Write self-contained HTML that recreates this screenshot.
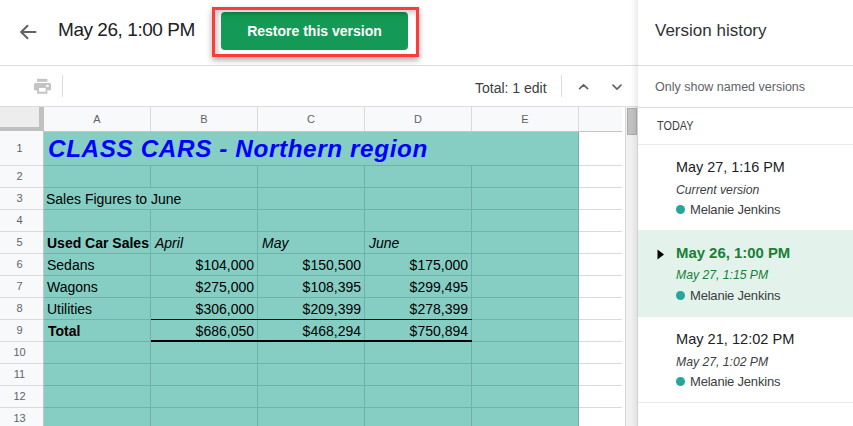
<!DOCTYPE html>
<html><head><meta charset="utf-8">
<style>
*{margin:0;padding:0;box-sizing:border-box}
html,body{width:853px;height:426px;overflow:hidden;background:#fff;font-family:"Liberation Sans",sans-serif;position:relative}
.a{position:absolute;white-space:nowrap}
.hl{position:absolute;height:1px;background:#dadce0}
.vl{position:absolute;width:1px;background:#dadce0}
/* sheet */
.rh{position:absolute;left:0;width:43px;background:#f8f9fa;color:#5f6368;font-size:11px;text-align:center}
.ch{position:absolute;top:107px;height:24px;background:#f8f9fa;color:#5f6368;font-size:11px;text-align:center;line-height:24px}
.cell{position:absolute;font-size:14px;color:#000;white-space:nowrap}
.r{text-align:right}
</style></head><body>

<!-- top header -->
<svg class="a" style="left:18px;top:23px" width="20" height="18" viewBox="0 0 20 18">
  <path d="M17.5 9H3.5M9.5 2.7L3.2 9l6.3 6.3" fill="none" stroke="#5f6368" stroke-width="2" stroke-linecap="round"/>
</svg>
<div class="a" style="left:58px;top:18px;font-size:19px;letter-spacing:-0.45px;color:#202124;line-height:24px">May 26, 1:00 PM</div>

<div class="a" style="left:212px;top:7px;width:207px;height:50px;border:3px solid #ff3a3a;box-shadow:0 3px 6px rgba(0,0,0,0.34), inset 3px 3px 5px rgba(0,0,0,0.2)"></div>
<div class="a" style="left:221px;top:12px;width:187px;height:38px;background:linear-gradient(#0b7a40,#11964f 4px,#149a56 12px);border-radius:4px;color:#fff;font-weight:bold;font-size:14px;line-height:38px;text-align:center">Restore this version</div>

<div class="hl" style="left:0;top:65px;width:853px"></div>

<!-- toolbar -->
<svg class="a" style="left:34px;top:78px" width="17" height="17" viewBox="0 0 17 17">
  <rect x="3" y="0.8" width="10.4" height="3" fill="#c4c4c4"/>
  <path fill-rule="evenodd" d="M1.5 5H15.5A1.5 1.5 0 0 1 17 6.5V12.3H13.4V15.8H3V12.3H0V6.5A1.5 1.5 0 0 1 1.5 5ZM5 10V13.8H11.7V10ZM12.3 7.1V9H14.7V7.1Z" fill="#c4c4c4"/>
</svg>
<div class="vl" style="left:62px;top:75px;height:22px"></div>
<div class="a" style="left:475px;top:79px;font-size:14px;color:#3c4043;line-height:18px">Total: 1 edit</div>
<div class="vl" style="left:561px;top:75px;height:22px"></div>
<svg class="a" style="left:577px;top:82px" width="13" height="10" viewBox="0 0 13 10">
  <path d="M2.6 6.6L6.6 2.8 10.6 6.6" fill="none" stroke="#5f6368" stroke-width="1.7" stroke-linecap="round"/>
</svg>
<svg class="a" style="left:611px;top:82px" width="13" height="10" viewBox="0 0 13 10">
  <path d="M2 3.2L6 7 10 3.2" fill="none" stroke="#5f6368" stroke-width="1.7" stroke-linecap="round"/>
</svg>
<div class="hl" style="left:0;top:106px;width:853px"></div>

<!-- SHEET -->
<div id="sheet"><div class="a" style="left:0px;top:107px;width:622px;height:24px;background:#f8f9fa;"></div>
<div class="a" style="left:0px;top:107px;width:39px;height:20px;background:#ededed;"></div>
<div class="a" style="left:39px;top:107px;width:5px;height:24px;background:#c0c0c0;"></div>
<div class="a" style="left:0px;top:127px;width:43px;height:4px;background:#c0c0c0;"></div>
<div class="a" style="left:150px;top:107px;width:1px;height:24px;background:#dadada;"></div>
<div class="a" style="left:257px;top:107px;width:1px;height:24px;background:#dadada;"></div>
<div class="a" style="left:364px;top:107px;width:1px;height:24px;background:#dadada;"></div>
<div class="a" style="left:471px;top:107px;width:1px;height:24px;background:#dadada;"></div>
<div class="a" style="left:578px;top:107px;width:1px;height:24px;background:#dadada;"></div>
<div class="a" style="left:43px;top:131px;width:579px;height:1px;background:#c6c6c6;"></div>
<div class="a" style="left:44px;top:107px;width:106px;height:24px;line-height:24px;text-align:center;font-size:11px;color:#5f6368">A</div>
<div class="a" style="left:151px;top:107px;width:106px;height:24px;line-height:24px;text-align:center;font-size:11px;color:#5f6368">B</div>
<div class="a" style="left:258px;top:107px;width:106px;height:24px;line-height:24px;text-align:center;font-size:11px;color:#5f6368">C</div>
<div class="a" style="left:365px;top:107px;width:106px;height:24px;line-height:24px;text-align:center;font-size:11px;color:#5f6368">D</div>
<div class="a" style="left:472px;top:107px;width:106px;height:24px;line-height:24px;text-align:center;font-size:11px;color:#5f6368">E</div>
<div class="a" style="left:0px;top:131px;width:43px;height:295px;background:#f8f9fa;"></div>
<div class="a" style="left:43px;top:131px;width:1px;height:295px;background:#c6c6c6;"></div>
<div class="a" style="left:0px;top:165px;width:43px;height:1px;background:#dadada;"></div>
<div class="a" style="left:0px;top:187px;width:43px;height:1px;background:#dadada;"></div>
<div class="a" style="left:0px;top:209px;width:43px;height:1px;background:#dadada;"></div>
<div class="a" style="left:0px;top:231px;width:43px;height:1px;background:#dadada;"></div>
<div class="a" style="left:0px;top:253px;width:43px;height:1px;background:#dadada;"></div>
<div class="a" style="left:0px;top:275px;width:43px;height:1px;background:#dadada;"></div>
<div class="a" style="left:0px;top:297px;width:43px;height:1px;background:#dadada;"></div>
<div class="a" style="left:0px;top:319px;width:43px;height:1px;background:#dadada;"></div>
<div class="a" style="left:0px;top:341px;width:43px;height:1px;background:#dadada;"></div>
<div class="a" style="left:0px;top:363px;width:43px;height:1px;background:#dadada;"></div>
<div class="a" style="left:0px;top:385px;width:43px;height:1px;background:#dadada;"></div>
<div class="a" style="left:0px;top:407px;width:43px;height:1px;background:#dadada;"></div>
<div class="a" style="left:0;top:132px;width:39px;height:33px;line-height:33px;text-align:center;font-size:11px;color:#5f6368">1</div>
<div class="a" style="left:0;top:166px;width:39px;height:21px;line-height:21px;text-align:center;font-size:11px;color:#5f6368">2</div>
<div class="a" style="left:0;top:188px;width:39px;height:21px;line-height:21px;text-align:center;font-size:11px;color:#5f6368">3</div>
<div class="a" style="left:0;top:210px;width:39px;height:21px;line-height:21px;text-align:center;font-size:11px;color:#5f6368">4</div>
<div class="a" style="left:0;top:232px;width:39px;height:21px;line-height:21px;text-align:center;font-size:11px;color:#5f6368">5</div>
<div class="a" style="left:0;top:254px;width:39px;height:21px;line-height:21px;text-align:center;font-size:11px;color:#5f6368">6</div>
<div class="a" style="left:0;top:276px;width:39px;height:21px;line-height:21px;text-align:center;font-size:11px;color:#5f6368">7</div>
<div class="a" style="left:0;top:298px;width:39px;height:21px;line-height:21px;text-align:center;font-size:11px;color:#5f6368">8</div>
<div class="a" style="left:0;top:320px;width:39px;height:21px;line-height:21px;text-align:center;font-size:11px;color:#5f6368">9</div>
<div class="a" style="left:0;top:342px;width:39px;height:21px;line-height:21px;text-align:center;font-size:11px;color:#5f6368">10</div>
<div class="a" style="left:0;top:364px;width:39px;height:21px;line-height:21px;text-align:center;font-size:11px;color:#5f6368">11</div>
<div class="a" style="left:0;top:386px;width:39px;height:21px;line-height:21px;text-align:center;font-size:11px;color:#5f6368">12</div>
<div class="a" style="left:0;top:408px;width:39px;height:21px;line-height:21px;text-align:center;font-size:11px;color:#5f6368">13</div>
<div class="a" style="left:44px;top:132px;width:534px;height:294px;background:#86cdc4;"></div>
<div class="a" style="left:579px;top:132px;width:43px;height:294px;background:#fff;"></div>
<div class="a" style="left:579px;top:165px;width:43px;height:1px;background:#dadada;"></div>
<div class="a" style="left:44px;top:165px;width:534px;height:1px;background:#70b1a9;"></div>
<div class="a" style="left:579px;top:187px;width:43px;height:1px;background:#dadada;"></div>
<div class="a" style="left:44px;top:187px;width:534px;height:1px;background:#70b1a9;"></div>
<div class="a" style="left:579px;top:209px;width:43px;height:1px;background:#dadada;"></div>
<div class="a" style="left:44px;top:209px;width:534px;height:1px;background:#70b1a9;"></div>
<div class="a" style="left:579px;top:231px;width:43px;height:1px;background:#dadada;"></div>
<div class="a" style="left:44px;top:231px;width:534px;height:1px;background:#70b1a9;"></div>
<div class="a" style="left:579px;top:253px;width:43px;height:1px;background:#dadada;"></div>
<div class="a" style="left:44px;top:253px;width:534px;height:1px;background:#70b1a9;"></div>
<div class="a" style="left:579px;top:275px;width:43px;height:1px;background:#dadada;"></div>
<div class="a" style="left:44px;top:275px;width:534px;height:1px;background:#70b1a9;"></div>
<div class="a" style="left:579px;top:297px;width:43px;height:1px;background:#dadada;"></div>
<div class="a" style="left:44px;top:297px;width:534px;height:1px;background:#70b1a9;"></div>
<div class="a" style="left:579px;top:319px;width:43px;height:1px;background:#dadada;"></div>
<div class="a" style="left:44px;top:319px;width:534px;height:1px;background:#70b1a9;"></div>
<div class="a" style="left:579px;top:341px;width:43px;height:1px;background:#dadada;"></div>
<div class="a" style="left:44px;top:341px;width:534px;height:1px;background:#70b1a9;"></div>
<div class="a" style="left:579px;top:363px;width:43px;height:1px;background:#dadada;"></div>
<div class="a" style="left:44px;top:363px;width:534px;height:1px;background:#70b1a9;"></div>
<div class="a" style="left:579px;top:385px;width:43px;height:1px;background:#dadada;"></div>
<div class="a" style="left:44px;top:385px;width:534px;height:1px;background:#70b1a9;"></div>
<div class="a" style="left:579px;top:407px;width:43px;height:1px;background:#dadada;"></div>
<div class="a" style="left:44px;top:407px;width:534px;height:1px;background:#70b1a9;"></div>
<div class="a" style="left:578px;top:132px;width:1px;height:294px;background:#70b1a9;"></div>
<div class="a" style="left:150px;top:166px;width:1px;height:21px;background:#70b1a9;"></div>
<div class="a" style="left:257px;top:166px;width:1px;height:21px;background:#70b1a9;"></div>
<div class="a" style="left:364px;top:166px;width:1px;height:21px;background:#70b1a9;"></div>
<div class="a" style="left:471px;top:166px;width:1px;height:21px;background:#70b1a9;"></div>
<div class="a" style="left:257px;top:188px;width:1px;height:21px;background:#70b1a9;"></div>
<div class="a" style="left:364px;top:188px;width:1px;height:21px;background:#70b1a9;"></div>
<div class="a" style="left:471px;top:188px;width:1px;height:21px;background:#70b1a9;"></div>
<div class="a" style="left:150px;top:210px;width:1px;height:21px;background:#70b1a9;"></div>
<div class="a" style="left:257px;top:210px;width:1px;height:21px;background:#70b1a9;"></div>
<div class="a" style="left:364px;top:210px;width:1px;height:21px;background:#70b1a9;"></div>
<div class="a" style="left:471px;top:210px;width:1px;height:21px;background:#70b1a9;"></div>
<div class="a" style="left:150px;top:232px;width:1px;height:21px;background:#70b1a9;"></div>
<div class="a" style="left:257px;top:232px;width:1px;height:21px;background:#70b1a9;"></div>
<div class="a" style="left:364px;top:232px;width:1px;height:21px;background:#70b1a9;"></div>
<div class="a" style="left:471px;top:232px;width:1px;height:21px;background:#70b1a9;"></div>
<div class="a" style="left:150px;top:254px;width:1px;height:21px;background:#70b1a9;"></div>
<div class="a" style="left:257px;top:254px;width:1px;height:21px;background:#70b1a9;"></div>
<div class="a" style="left:364px;top:254px;width:1px;height:21px;background:#70b1a9;"></div>
<div class="a" style="left:471px;top:254px;width:1px;height:21px;background:#70b1a9;"></div>
<div class="a" style="left:150px;top:276px;width:1px;height:21px;background:#70b1a9;"></div>
<div class="a" style="left:257px;top:276px;width:1px;height:21px;background:#70b1a9;"></div>
<div class="a" style="left:364px;top:276px;width:1px;height:21px;background:#70b1a9;"></div>
<div class="a" style="left:471px;top:276px;width:1px;height:21px;background:#70b1a9;"></div>
<div class="a" style="left:150px;top:298px;width:1px;height:21px;background:#70b1a9;"></div>
<div class="a" style="left:257px;top:298px;width:1px;height:21px;background:#70b1a9;"></div>
<div class="a" style="left:364px;top:298px;width:1px;height:21px;background:#70b1a9;"></div>
<div class="a" style="left:471px;top:298px;width:1px;height:21px;background:#70b1a9;"></div>
<div class="a" style="left:150px;top:320px;width:1px;height:21px;background:#70b1a9;"></div>
<div class="a" style="left:257px;top:320px;width:1px;height:21px;background:#70b1a9;"></div>
<div class="a" style="left:364px;top:320px;width:1px;height:21px;background:#70b1a9;"></div>
<div class="a" style="left:471px;top:320px;width:1px;height:21px;background:#70b1a9;"></div>
<div class="a" style="left:150px;top:342px;width:1px;height:21px;background:#70b1a9;"></div>
<div class="a" style="left:257px;top:342px;width:1px;height:21px;background:#70b1a9;"></div>
<div class="a" style="left:364px;top:342px;width:1px;height:21px;background:#70b1a9;"></div>
<div class="a" style="left:471px;top:342px;width:1px;height:21px;background:#70b1a9;"></div>
<div class="a" style="left:150px;top:364px;width:1px;height:21px;background:#70b1a9;"></div>
<div class="a" style="left:257px;top:364px;width:1px;height:21px;background:#70b1a9;"></div>
<div class="a" style="left:364px;top:364px;width:1px;height:21px;background:#70b1a9;"></div>
<div class="a" style="left:471px;top:364px;width:1px;height:21px;background:#70b1a9;"></div>
<div class="a" style="left:150px;top:386px;width:1px;height:21px;background:#70b1a9;"></div>
<div class="a" style="left:257px;top:386px;width:1px;height:21px;background:#70b1a9;"></div>
<div class="a" style="left:364px;top:386px;width:1px;height:21px;background:#70b1a9;"></div>
<div class="a" style="left:471px;top:386px;width:1px;height:21px;background:#70b1a9;"></div>
<div class="a" style="left:150px;top:408px;width:1px;height:21px;background:#70b1a9;"></div>
<div class="a" style="left:257px;top:408px;width:1px;height:21px;background:#70b1a9;"></div>
<div class="a" style="left:364px;top:408px;width:1px;height:21px;background:#70b1a9;"></div>
<div class="a" style="left:471px;top:408px;width:1px;height:21px;background:#70b1a9;"></div>
<div class="a" style="left:48px;top:135px;font-size:24.3px;letter-spacing:0.6px;font-weight:bold;font-style:italic;color:#0000ff;line-height:28px">CLASS CARS - Northern region</div>
<div class="a" style="left:46px;top:191px;font-size:14px;color:#000;line-height:16px">Sales Figures to June</div>
<div class="a" style="left:47px;top:235px;font-size:14px;color:#000;line-height:16px;font-weight:bold">Used Car Sales</div>
<div class="a" style="left:155px;top:235px;font-size:14px;color:#000;line-height:16px;font-style:italic">April</div>
<div class="a" style="left:262px;top:235px;font-size:14px;color:#000;line-height:16px;font-style:italic">May</div>
<div class="a" style="left:369px;top:235px;font-size:14px;color:#000;line-height:16px;font-style:italic">June</div>
<div class="a" style="left:47px;top:257px;font-size:14px;color:#000;line-height:16px">Sedans</div>
<div class="a" style="left:47px;top:279px;font-size:14px;color:#000;line-height:16px">Wagons</div>
<div class="a" style="left:47px;top:301px;font-size:14px;color:#000;line-height:16px">Utilities</div>
<div class="a" style="left:48px;top:323px;font-size:14px;color:#000;line-height:16px;font-weight:bold">Total</div>
<div class="a" style="left:151px;top:257px;width:103px;text-align:right;font-size:14px;color:#000;line-height:16px">$104,000</div>
<div class="a" style="left:258px;top:257px;width:103px;text-align:right;font-size:14px;color:#000;line-height:16px">$150,500</div>
<div class="a" style="left:365px;top:257px;width:103px;text-align:right;font-size:14px;color:#000;line-height:16px">$175,000</div>
<div class="a" style="left:151px;top:279px;width:103px;text-align:right;font-size:14px;color:#000;line-height:16px">$275,000</div>
<div class="a" style="left:258px;top:279px;width:103px;text-align:right;font-size:14px;color:#000;line-height:16px">$108,395</div>
<div class="a" style="left:365px;top:279px;width:103px;text-align:right;font-size:14px;color:#000;line-height:16px">$299,495</div>
<div class="a" style="left:151px;top:301px;width:103px;text-align:right;font-size:14px;color:#000;line-height:16px">$306,000</div>
<div class="a" style="left:258px;top:301px;width:103px;text-align:right;font-size:14px;color:#000;line-height:16px">$209,399</div>
<div class="a" style="left:365px;top:301px;width:103px;text-align:right;font-size:14px;color:#000;line-height:16px">$278,399</div>
<div class="a" style="left:151px;top:323px;width:103px;text-align:right;font-size:14px;color:#000;line-height:16px">$686,050</div>
<div class="a" style="left:258px;top:323px;width:103px;text-align:right;font-size:14px;color:#000;line-height:16px">$468,294</div>
<div class="a" style="left:365px;top:323px;width:103px;text-align:right;font-size:14px;color:#000;line-height:16px">$750,894</div>
<div class="a" style="left:151px;top:319px;width:321px;height:1px;background:#000;"></div>
<div class="a" style="left:151px;top:340px;width:321px;height:2px;background:#000;"></div>
<div class="a" style="left:625px;top:107px;width:1px;height:319px;background:#d6d6d6;"></div>
<div class="a" style="left:626px;top:107px;width:11px;height:319px;background:#f1f1f1;"></div>
<div class="a" style="left:637px;top:107px;width:1px;height:319px;background:#e0e0e0;"></div>
<div class="a" style="left:627px;top:108px;width:10px;height:27px;background:#c1c1c1;border:1px solid #acacac"></div></div><!--/sheet-->

<!-- panel -->
<div class="a" style="left:631px;top:0;width:7px;height:426px;background:linear-gradient(to right,rgba(0,0,0,0),rgba(0,0,0,0.07))"></div>
<div class="a" style="left:638px;top:0;width:215px;height:426px;background:#fff"></div>
<div class="hl" style="left:638px;top:65px;width:215px"></div>
<div class="hl" style="left:638px;top:107px;width:215px"></div>
<div class="a" style="left:655px;top:21px;font-size:17px;color:#303134;line-height:20px">Version history</div>
<div class="a" style="left:655px;top:80px;font-size:12.5px;color:#5f6368;line-height:15px">Only show named versions</div>
<div class="a" style="left:657px;top:119px;font-size:12.5px;color:#3c4043;line-height:15px;transform:scaleX(0.87);transform-origin:0 0">TODAY</div>
<div class="hl" style="left:638px;top:144px;width:215px;background:#e8eaed"></div>

<div class="a" style="left:676px;top:159px;font-size:14.4px;color:#202124;line-height:17px">May 27, 1:16 PM</div>
<div class="a" style="left:676px;top:183px;font-size:12.2px;font-style:italic;color:#3c4043;line-height:15px">Current version</div>
<div class="a" style="left:676px;top:205px;width:9px;height:9px;border-radius:50%;background:#26a69a"></div>
<div class="a" style="left:690px;top:202px;font-size:13px;letter-spacing:-0.2px;color:#3c4043;line-height:15px">Melanie Jenkins</div>

<div class="a" style="left:638px;top:230px;width:215px;height:87px;background:#e3f2ea"></div>
<svg class="a" style="left:657px;top:249px" width="8" height="11" viewBox="0 0 8 11"><path d="M0.5 0.5L7 5.5 0.5 10.5z" fill="#000"/></svg>
<div class="a" style="left:676px;top:245px;font-size:14.9px;font-weight:bold;color:#188038;line-height:17px">May 26, 1:00 PM</div>
<div class="a" style="left:676px;top:268px;font-size:12.2px;font-style:italic;color:#188038;line-height:15px">May 27, 1:15 PM</div>
<div class="a" style="left:676px;top:291px;width:9px;height:9px;border-radius:50%;background:#26a69a"></div>
<div class="a" style="left:690px;top:288px;font-size:13px;letter-spacing:-0.2px;color:#3c4043;line-height:15px">Melanie Jenkins</div>

<div class="a" style="left:676px;top:331px;font-size:14.6px;color:#202124;line-height:17px">May 21, 12:02 PM</div>
<div class="a" style="left:676px;top:355px;font-size:12.2px;font-style:italic;color:#3c4043;line-height:15px">May 27, 1:02 PM</div>
<div class="a" style="left:676px;top:377px;width:9px;height:9px;border-radius:50%;background:#26a69a"></div>
<div class="a" style="left:690px;top:374px;font-size:13px;letter-spacing:-0.2px;color:#3c4043;line-height:15px">Melanie Jenkins</div>
<div class="hl" style="left:638px;top:402px;width:215px;background:#e8eaed"></div>

</body></html>
